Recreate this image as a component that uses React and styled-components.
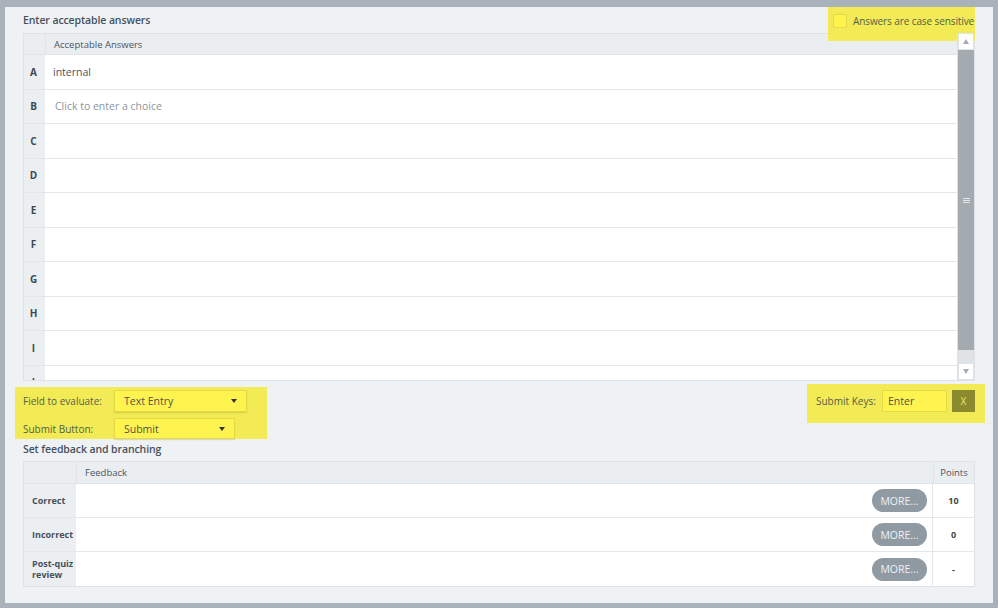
import React from "react";
import styled, { createGlobalStyle } from "styled-components";

const Global = createGlobalStyle`
  html, body { margin: 0; padding: 0; }
  body {
    background: #a9b2ba;
    font-family: "Open Sans", "Noto Sans", sans-serif;
    color: #4a5560;
  }
  * { box-sizing: border-box; }
`;

const Frame = styled.div`
  width: 998px;
  height: 608px;
  padding: 7px 5px 5px 5px;
`;

const Panel = styled.div`
  height: 596px;
  background: #eff2f5;
  padding: 0 18px;
  display: flex;
  flex-direction: column;
`;

const TopRow = styled.div`
  display: flex;
  justify-content: space-between;
  align-items: flex-start;
  height: 26px;
`;

const Title = styled.div`
  font-size: 10.5px;
  font-weight: 600;
  color: #46515c;
  line-height: 26px;
  letter-spacing: -0.1px;
`;

const Highlight = styled.div`
  background: #f2eb55;
  display: flex;
  align-items: center;
  position: relative;
  z-index: 1;
`;

const CaseBox = styled(Highlight)`
  height: 34px;
  width: 147px;
  padding: 7px 0 0 5px;
  gap: 6px;
  margin-bottom: -8px;
  align-items: flex-start;
`;

const Check = styled.span`
  width: 14px;
  height: 14px;
  background: #fff34c;
  border: 1px solid #e2d84a;
  flex: none;
`;

const CaseLabel = styled.span`
  font-size: 10px;
  color: #55604a;
  line-height: 14px;
  white-space: nowrap;
  letter-spacing: -0.1px;
`;

const TableBox = styled.div`
  display: flex;
  border: 1px solid #dde2e6;
  border-top: none;
  height: 348px;
`;

const TableMain = styled.div`
  flex: 1;
  display: flex;
  flex-direction: column;
  min-width: 0;
`;

const HeadRow = styled.div`
  display: grid;
  grid-template-columns: ${(p) => p.$cols};
  height: ${(p) => p.$h}px;
  background: #eaeef1;
  border-bottom: 1px solid #dfe4e8;
  border-top: 1px solid #dde2e6;
  flex: none;
`;

const HeadCell = styled.div`
  font-size: 9.5px;
  color: #4a5560;
  display: flex;
  align-items: center;
  justify-content: ${(p) => (p.$center ? "center" : "flex-start")};
  padding-left: ${(p) => (p.$center ? 0 : 8)}px;
  border-left: ${(p) => (p.$first ? "none" : "1px solid #dfe4e8")};
`;

const ScrollArea = styled.div`
  flex: 1;
  overflow: hidden;
`;

const Row = styled.div`
  display: grid;
  grid-template-columns: ${(p) => p.$cols};
  height: 34.5px;
  border-bottom: 1px solid #e3e7ea;
`;

const Letter = styled.div`
  background: #eceff2;
  font-size: 10px;
  font-weight: 700;
  color: #3e4852;
  display: flex;
  align-items: center;
  justify-content: center;
  padding-right: 2px;
`;

const Cell = styled.div`
  background: #fff;
  font-size: 10.5px;
  display: flex;
  align-items: center;
  padding-left: ${(p) => p.$pad || 8}px;
  color: ${(p) => (p.$muted ? "#8b959d" : "#4a5560")};
`;

const Scrollbar = styled.div`
  width: 17px;
  display: flex;
  flex-direction: column;
  position: relative;
  z-index: 2;
  background: #dfe3e6;
  border-left: 1px solid #dde2e6;
`;

const ScrollBtn = styled.div`
  height: 17px;
  background: #fff;
  border: 1px solid #dde2e6;
  display: flex;
  align-items: center;
  justify-content: center;
  flex: none;
  ${(p) => (p.$bottom ? "margin-top: auto;" : "")}
`;

const Tri = styled.span`
  width: 0;
  height: 0;
  border-left: 3px solid transparent;
  border-right: 3px solid transparent;
  ${(p) =>
    p.$down
      ? "border-top: 5px solid #a4acb3;"
      : "border-bottom: 5px solid #a4acb3;"}
`;

const Thumb = styled.div`
  height: 300px;
  background: #a3abb0;
  display: flex;
  align-items: center;
  justify-content: center;
  flex: none;
`;

const Grip = styled.div`
  width: 7px;
  display: flex;
  flex-direction: column;
  gap: 1px;
  span {
    height: 1px;
    background: #e4e8ea;
  }
`;

const Controls = styled.div`
  display: flex;
  justify-content: space-between;
  align-items: flex-start;
  margin: 0 -10px 0 -8px;
  height: 62px;
`;

const LeftBox = styled(Highlight)`
  margin-top: 6px;
  width: 252px;
  height: 52px;
  padding: 3px 8px 0 8px;
  flex-direction: column;
  align-items: stretch;
  gap: 6px;
`;

const FieldRow = styled.div`
  display: flex;
  align-items: center;
  height: ${(p) => p.$h}px;
`;

const FieldLabel = styled.span`
  width: 91px;
  font-size: 10px;
  color: #55604a;
  white-space: nowrap;
`;

const Select = styled.div`
  width: ${(p) => p.$w}px;
  height: 100%;
  background: #fff34f;
  border: 1px solid #e4da45;
  box-shadow: 0 1px 1px rgba(150, 140, 20, 0.25);
  display: flex;
  align-items: center;
  justify-content: space-between;
  padding: 0 9px 0 9px;
  font-size: 10.5px;
  color: #4c5448;
`;

const Caret = styled.span`
  width: 0;
  height: 0;
  border-left: 3.5px solid transparent;
  border-right: 3.5px solid transparent;
  border-top: 4px solid #2f3336;
`;

const RightBox = styled(Highlight)`
  margin-top: 3px;
  width: 178px;
  height: 39px;
  padding: 6px 10px 0 9px;
  align-items: flex-start;
`;

const KeyLabel = styled.span`
  font-size: 10px;
  color: #55604a;
  line-height: 22px;
  width: 66px;
  white-space: nowrap;
`;

const KeyInput = styled.div`
  width: 65px;
  height: 22px;
  background: #fff34f;
  border: 1px solid #e4da45;
  font-size: 10.5px;
  color: #4c5448;
  display: flex;
  align-items: center;
  padding-left: 5px;
`;

const XButton = styled.div`
  width: 23px;
  height: 22px;
  margin-left: 5px;
  background: #8b8a2f;
  color: #ece46a;
  font-size: 10px;
  display: flex;
  align-items: center;
  justify-content: center;
`;

const SubTitle = styled(Title)`
  line-height: 13px;
  height: 13px;
  margin-bottom: 5px;
`;

const FeedTable = styled.div`
  border: 1px solid #dde2e6;
  border-top: none;
  display: flex;
  flex-direction: column;
`;

const feedCols = "52px 1fr 41px";

const FeedRow = styled.div`
  display: grid;
  grid-template-columns: ${feedCols};
  height: 34px;
  border-bottom: ${(p) => (p.$last ? "none" : "1px solid #e3e7ea")};
`;

const RowLabel = styled.div`
  background: #eceff2;
  font-size: 9px;
  font-weight: 700;
  color: #46515c;
  line-height: 11.5px;
  display: flex;
  align-items: center;
  padding-left: 8px;
`;

const FeedCell = styled.div`
  background: #fff;
  display: flex;
  align-items: center;
  justify-content: flex-end;
  padding-right: 5px;
  border-right: 1px solid #e3e7ea;
`;

const More = styled.div`
  width: 55px;
  height: 23px;
  border-radius: 12px;
  background: #8f9aa3;
  color: #eef1f3;
  font-size: 10.5px;
  display: flex;
  align-items: center;
  justify-content: center;
`;

const Points = styled.div`
  background: #fff;
  font-size: 9px;
  font-weight: 700;
  color: #3e4852;
  display: flex;
  align-items: center;
  justify-content: center;
`;

const letters = ["A", "B", "C", "D", "E", "F", "G", "H", "I", "J"];
const answerCols = "21px 1fr";

const feedback = [
  { label: "Correct", pts: "10" },
  { label: "Incorrect", pts: "0" },
  { label: <>Post-quiz<br />review</>, pts: "-" },
];

export default function App() {
  return (
    <>
      <Global />
      <Frame>
        <Panel>
          <TopRow>
            <Title>Enter acceptable answers</Title>
            <CaseBox>
              <Check />
              <CaseLabel>Answers are case sensitive</CaseLabel>
            </CaseBox>
          </TopRow>
          <TableBox>
            <TableMain>
              <HeadRow $cols={answerCols} $h={22}>
                <HeadCell $first />
                <HeadCell>Acceptable Answers</HeadCell>
              </HeadRow>
              <ScrollArea>
                {letters.map((l, i) => (
                  <Row key={l} $cols={answerCols}>
                    <Letter>{l}</Letter>
                    {i === 0 ? (
                      <Cell>internal</Cell>
                    ) : i === 1 ? (
                      <Cell $muted $pad={10}>Click to enter a choice</Cell>
                    ) : (
                      <Cell />
                    )}
                  </Row>
                ))}
              </ScrollArea>
            </TableMain>
            <Scrollbar>
              <ScrollBtn>
                <Tri />
              </ScrollBtn>
              <Thumb>
                <Grip>
                  <span />
                  <span />
                  <span />
                </Grip>
              </Thumb>
              <ScrollBtn $bottom>
                <Tri $down />
              </ScrollBtn>
            </Scrollbar>
          </TableBox>
          <Controls>
            <LeftBox>
              <FieldRow $h={22}>
                <FieldLabel>Field to evaluate:</FieldLabel>
                <Select $w={133}>
                  Text Entry
                  <Caret />
                </Select>
              </FieldRow>
              <FieldRow $h={21}>
                <FieldLabel>Submit Button:</FieldLabel>
                <Select $w={121}>
                  Submit
                  <Caret />
                </Select>
              </FieldRow>
            </LeftBox>
            <RightBox>
              <KeyLabel>Submit Keys:</KeyLabel>
              <KeyInput>Enter</KeyInput>
              <XButton>X</XButton>
            </RightBox>
          </Controls>
          <SubTitle>Set feedback and branching</SubTitle>
          <FeedTable>
            <HeadRow $cols={feedCols} $h={23}>
              <HeadCell $first />
              <HeadCell>Feedback</HeadCell>
              <HeadCell $center>Points</HeadCell>
            </HeadRow>
            {feedback.map((f, i) => (
              <FeedRow key={i} $last={i === feedback.length - 1}>
                <RowLabel>{f.label}</RowLabel>
                <FeedCell>
                  <More>MORE...</More>
                </FeedCell>
                <Points>{f.pts}</Points>
              </FeedRow>
            ))}
          </FeedTable>
        </Panel>
      </Frame>
    </>
  );
}
